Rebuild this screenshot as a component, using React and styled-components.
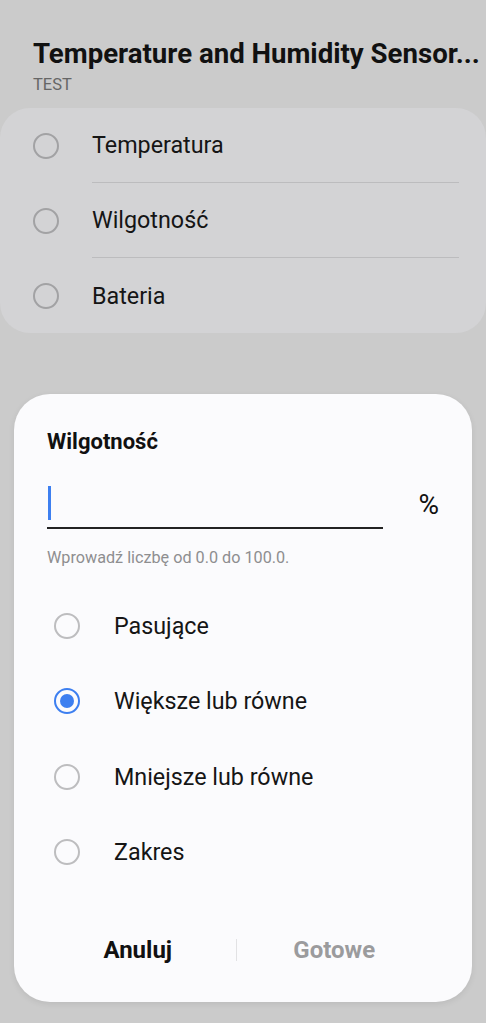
import React, { useState } from "react";
import styled, { createGlobalStyle } from "styled-components";

const GlobalStyle = createGlobalStyle`
  html, body {
    margin: 0;
    padding: 0;
    background: #cbcbcb;
  }
  body {
    font-family: Roboto, "Noto Sans", "Liberation Sans", sans-serif;
    color: #111;
  }
`;

const Page = styled.div`
  width: 486px;
  min-height: 1023px;
  background: #cbcbcb;
  overflow: hidden;
`;

const Header = styled.div`
  padding: 38px 0 0 33px;
`;

const Title = styled.h1`
  margin: 0;
  font-size: 27.6px;
  line-height: 32px;
  font-weight: 700;
  color: #111;
  white-space: nowrap;
`;

const Sub = styled.div`
  margin-top: 5px;
  font-size: 16.5px;
  line-height: 20px;
  color: #666;
`;

const SensorCard = styled.div`
  margin-top: 13px;
  background: #d3d3d5;
  border-radius: 30px;
`;

const SensorRow = styled.div`
  display: flex;
  align-items: center;
  height: 75px;
  padding-left: 33px;
`;

const SensorLabel = styled.div`
  flex: 1;
  align-self: stretch;
  display: flex;
  align-items: center;
  margin-left: 33px;
  margin-right: 27px;
  font-size: 23.3px;
  color: #151515;
  border-bottom: ${(p) => (p.last ? "none" : "1px solid #bcbcbe")};
`;

const Radio = styled.span`
  box-sizing: border-box;
  width: 26px;
  height: 26px;
  flex: none;
  border-radius: 50%;
  border: 2px solid ${(p) => (p.checked ? "#3d7ff0" : p.ring)};
  display: flex;
  align-items: center;
  justify-content: center;
  &::after {
    content: "";
    display: ${(p) => (p.checked ? "block" : "none")};
    width: 14px;
    height: 14px;
    border-radius: 50%;
    background: #3d7ff0;
  }
`;

const Dialog = styled.div`
  margin: 61px 14px 0;
  background: #fbfbfd;
  border-radius: 36px;
  padding: 35px 33px 22px;
  box-shadow: 0 2px 6px rgba(0, 0, 0, 0.08);
`;

const DialogTitle = styled.div`
  font-size: 22px;
  line-height: 26px;
  font-weight: 700;
  color: #111;
`;

const InputRow = styled.div`
  display: flex;
  align-items: center;
  margin-top: 24px;
`;

const Field = styled.div`
  flex: 1;
  height: 48px;
  border-bottom: 2.5px solid #232323;
  display: flex;
  align-items: center;
`;

const Caret = styled.span`
  width: 2.5px;
  height: 34px;
  margin-left: 1px;
  background: #3d7ff0;
`;

const Unit = styled.div`
  width: 56px;
  text-align: right;
  font-size: 28px;
  color: #111;
`;

const Helper = styled.div`
  margin-top: 19px;
  font-size: 16.2px;
  line-height: 20px;
  color: #8e8e90;
`;

const Options = styled.div`
  margin-top: 20px;
`;

const Option = styled.div`
  display: flex;
  align-items: center;
  height: 75.5px;
  padding-left: 7px;
  cursor: pointer;
`;

const OptionLabel = styled.span`
  margin-left: 34px;
  font-size: 23.3px;
  color: #151515;
`;

const Buttons = styled.div`
  display: flex;
  align-items: center;
  height: 60px;
  margin: 30px 7px 0 -7px;
`;

const Button = styled.button`
  flex: 1;
  border: none;
  background: none;
  font-family: inherit;
  font-size: 24px;
  font-weight: 700;
  color: ${(p) => (p.muted ? "#9b9b9d" : "#111")};
  padding: 0;
`;

const Sep = styled.span`
  width: 1px;
  height: 22px;
  background: #e2e2e4;
`;

const sensors = ["Temperatura", "Wilgotność", "Bateria"];
const modes = ["Pasujące", "Większe lub równe", "Mniejsze lub równe", "Zakres"];

export default function App() {
  const [mode, setMode] = useState(1);

  return (
    <Page>
      <GlobalStyle />
      <Header>
        <Title>Temperature and Humidity Sensor...</Title>
        <Sub>TEST</Sub>
      </Header>
      <SensorCard>
        {sensors.map((s, i) => (
          <SensorRow key={s}>
            <Radio ring="#a2a2a4" />
            <SensorLabel last={i === sensors.length - 1}>{s}</SensorLabel>
          </SensorRow>
        ))}
      </SensorCard>

      <Dialog>
        <DialogTitle>Wilgotność</DialogTitle>
        <InputRow>
          <Field>
            <Caret />
          </Field>
          <Unit>%</Unit>
        </InputRow>
        <Helper>Wprowadź liczbę od 0.0 do 100.0.</Helper>
        <Options>
          {modes.map((m, i) => (
            <Option key={m} onClick={() => setMode(i)}>
              <Radio ring="#bdbdbf" checked={mode === i} />
              <OptionLabel>{m}</OptionLabel>
            </Option>
          ))}
        </Options>
        <Buttons>
          <Button>Anuluj</Button>
          <Sep />
          <Button muted>Gotowe</Button>
        </Buttons>
      </Dialog>
    </Page>
  );
}
